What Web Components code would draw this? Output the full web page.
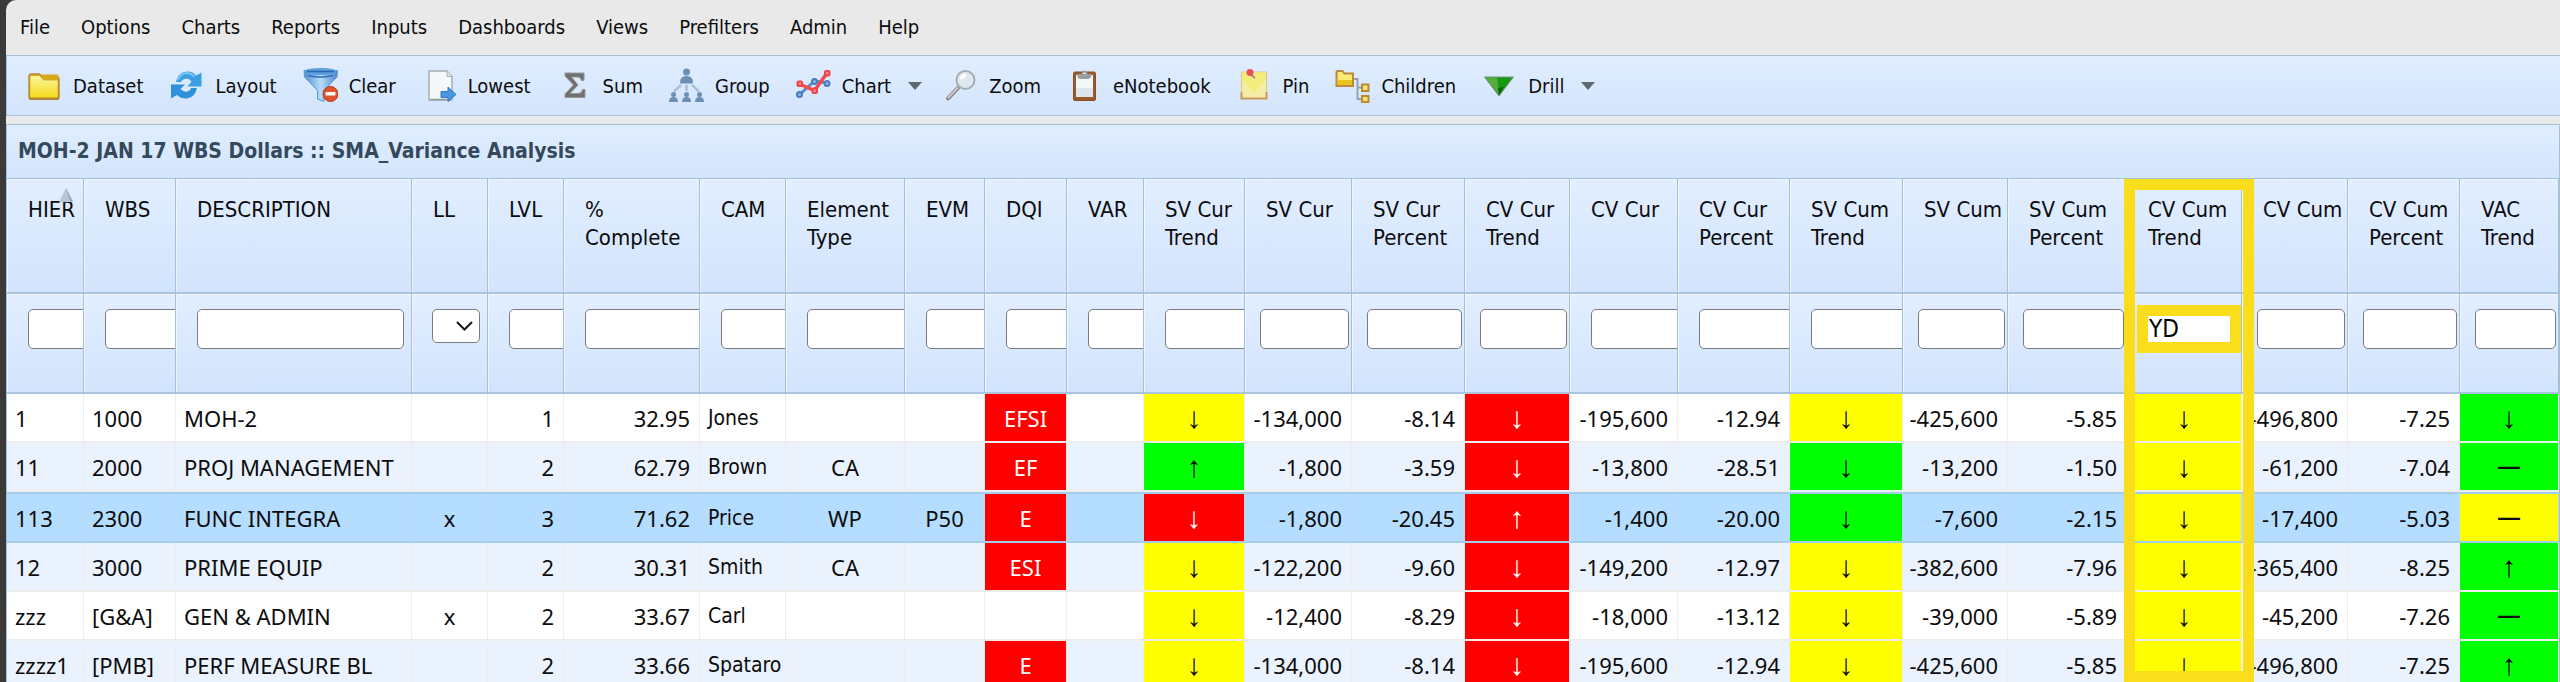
<!DOCTYPE html>
<html lang="en">
<head>
<meta charset="utf-8">
<title>SMA Variance Analysis</title>
<style>
  body { margin: 0; background: #3a3a3a; }
</style>
</head>
<body>
<app-window>
  <menu-bar slot="menu"></menu-bar>
  <tool-bar slot="tools">
    <tool-button icon="folder">Dataset</tool-button>
    <tool-button icon="refresh">Layout</tool-button>
    <tool-button icon="funnel">Clear</tool-button>
    <tool-button icon="page">Lowest</tool-button>
    <tool-button icon="sigma">Sum</tool-button>
    <tool-button icon="group">Group</tool-button>
    <tool-button icon="chart" menu>Chart</tool-button>
    <tool-button icon="zoom">Zoom</tool-button>
    <tool-button icon="clipboard">eNotebook</tool-button>
    <tool-button icon="pin">Pin</tool-button>
    <tool-button icon="children">Children</tool-button>
    <tool-button icon="drill" menu>Drill</tool-button>
  </tool-bar>
  <grid-panel>
    <span slot="title">MOH-2 JAN 17 WBS Dollars :: SMA_Variance Analysis</span>
    <data-grid></data-grid>
  </grid-panel>
</app-window>

<script>
const define = (name, html, setup) => customElements.define(name, class extends HTMLElement {
  constructor() {
    super();
    this.attachShadow({ mode: 'open' }).innerHTML = html;
  }
  connectedCallback() { if (setup) setup(this, this.shadowRoot); }
});

const ICONS = {
  folder: `<defs><linearGradient id="f" x2="0" y2="1"><stop stop-color="#fdf8a0"/><stop offset="1" stop-color="#f3dc1c"/></linearGradient></defs>
    <path d="M2 8.500q0-2.500 2.500-2.500h8l3 3h14q2.500 0 2.500 2.500v17q0 2.500-2.500 2.500h-25q-2.500 0-2.500-2.500z" fill="#d9ae22" stroke="#b98a3c" stroke-width="1.500"/>
    <path d="M13 6.500h17q1.500 0 1.500 2v3.500h-14z" fill="#d6a81e"/>
    <path d="M3.500 8h9l4 4.500h14v15.500q0 1-1 1h-25q-1 0-1-1z" fill="url(#f)"/><path d="M2 31h30" stroke="#a97f38" stroke-width="1.500"/>`,
  refresh: `<g fill="#3c9fe4"><path d="M7 14q2-9.500 10.500-10.500q6-.5 9.500 4l5.500-3v14h-14l4-5q-3-4-7-2.500q-3 1-3.500 3z"/>
    <path d="M28 20q-2 9.500-10 10.500q-6 .5-10-3.500l-6 3.500v-14h14l-4.500 4.500q3.500 3.500 7 2.500q3-1 3.500-3.500z" fill="#2f90dc"/></g><path d="M9 12q2.500-6.500 8.500-7q5 0 8 4" fill="none" stroke="#7cc3f2" stroke-width="2"/>`,
  funnel: `<defs><linearGradient id="n"><stop stop-color="#4c8fd4"/><stop offset=".5" stop-color="#b7dcfa"/><stop offset="1" stop-color="#4a87cb"/></linearGradient></defs>
    <path d="M1 2.500L1.500 9l13 13.500v8.500l6.500 2.500v-11l13-13.500l.5-6.500z" fill="url(#n)" stroke="#5d96d3"/>
    <ellipse cx="17.500" cy="3.500" rx="16.500" ry="3.500" fill="#5c9ddd"/><path d="M4 3.500h27" stroke="#2c66ad" stroke-width="1.500"/><path d="M5 7.500q12 3 25 0" stroke="#3471b6" stroke-width="1.500" fill="none"/>
    <circle cx="27.500" cy="26" r="7.500" fill="#e2522b" stroke="#b0392a"/><rect x="22.500" y="24" width="10" height="3.500" rx="1" fill="#fff"/>`,
  page: `<path d="M7 3h18l5 5.500v23.500h-23z" fill="#f4f8f9" stroke="#a6adb5" stroke-width="1.500"/><path d="M25 3v5.500h5" fill="#dfe6ea" stroke="#a6adb5"/>
    <path d="M8 31.500h21" stroke="#8f99a3" stroke-width="1.500"/><path d="M19 23.500h7v-4.500l8 7.500l-8 7v-4h-7z" fill="#4b97df" stroke="#2f78c2"/>`,
  sigma: `<path d="M8 5h19v7.500h-2.500q-.5-3.500-4-3.500h-6l6.500 8l-8 8.500h8q4 0 4.500-4h2.500v8h-20v-3.500l8.500-9l-8.500-9z" fill="#707070" stroke="#969696"/>`,
  group: `<g fill="#6c90b3"><circle cx="17.500" cy="4" r="3.500"/><path d="M11 15.500q-.5-7.500 6.500-7.500t6.500 7.500z"/>
    <circle cx="4.500" cy="26.500" r="2.500"/><path d="M0 34q0-5 4.500-5t4.500 5z"/><circle cx="17.500" cy="26.500" r="2.500"/><path d="M13 34q0-5 4.500-5t4.500 5z"/><circle cx="30.500" cy="26.500" r="2.500"/><path d="M26 34q0-5 4.500-5t4.500 5z"/></g>
    <path d="M17.500 17v6M12 17l-7 6.500M23 17l7 6.500" stroke="#a9c1d8" stroke-width="2.500" fill="none"/>`,
  chart: `<path d="M3.500 26.500L18.500 13l13 2" stroke="#5b87bd" stroke-width="3" fill="none"/><g fill="#8fb4e0" stroke="#4a7dbc" stroke-width="2"><circle cx="3.500" cy="26.500" r="2.500"/><circle cx="18.500" cy="13.500" r="2.500"/><circle cx="31" cy="15.500" r="2.500"/></g>
    <path d="M3.500 16L18.500 22.500L31 5" stroke="#f24a4e" stroke-width="3.500" fill="none"/><g fill="#f78f90" stroke="#f04448" stroke-width="2"><rect x="1.500" y="13.500" width="4.500" height="4.500" rx="1"/><rect x="16.500" y="20.500" width="4.500" height="4.500" rx="1"/><rect x="29" y="3" width="4.500" height="4.500" rx="1"/></g>`,
  zoom: `<path d="M15 20L5 30.500" stroke="#8e8e92" stroke-width="4" stroke-linecap="round"/><path d="M15 19.500L5 30" stroke="#d6d6d8" stroke-width="1.500"/><circle cx="22.500" cy="12" r="9" fill="#dfe8ef" stroke="#a5abb2" stroke-width="2"/><path d="M17 12q0-6 6-6.500q2 3-6 6.500z" fill="#fff"/>`,
  clipboard: `<rect x="6.500" y="4" width="22" height="28.500" rx="1.500" fill="#9a5a2c" stroke="#8a4c22"/><rect x="9" y="7" width="17" height="22" fill="#f3f7f8"/><path d="M9 20h17v9h-17z" fill="#dde6ea"/><path d="M10.500 6h4q0-3.500 3-3.500t3 3.500h4v2q-1 3-3 3h-8q-3 0-3-3z" fill="#9b9da1"/><path d="M15.500 6q2-3 4 0z" fill="#e8e8e8"/>`,
  pin: `<rect x="4.500" y="4" width="25" height="26.500" fill="#f4eda6" stroke="#dcc987"/><path d="M5 4.500h24v7l-12 13l-12-13z" fill="#f3ed7c"/><path d="M4.500 24v6.500h25v-6.500" fill="none" stroke="#c79a5c" stroke-width="2"/><path d="M13 6l5 4" stroke="#a08a80" stroke-width="2"/><circle cx="13" cy="4.500" r="3.500" fill="#ea4f53"/>`,
  children: `<path d="M19 11h3.500v20h6M22.500 19.500h6" fill="none" stroke="#9aa1aa" stroke-width="2"/><path d="M1.500 4q0-1 1-1h5l2 2.500h8.500v12.500h-16.500z" fill="#fbe978" stroke="#bb8a40" stroke-width="2"/><path d="M3 12h14v5h-14z" fill="#ebc41b"/>
    <rect x="27" y="16.500" width="6.500" height="6.500" fill="#f8e277" stroke="#bb8a35" stroke-width="2"/><rect x="27" y="28" width="6.500" height="6" fill="#f8e277" stroke="#bb8a35" stroke-width="2"/>`,
  drill: `<path d="M2.500 9h29l-14.500 19z" fill="#169a10" stroke="#7d9480"/><path d="M3 9.500h12l2.500 17.500z" fill="#56ab3c"/><path d="M16 20l6-1-5 8z" fill="#0b5f08"/>`
};

define('app-window', `
  <style>
    :host { display: block; height: 100vh; overflow: hidden; box-sizing: border-box; padding-left: 6px; font-family: "DejaVu Sans Condensed", "Noto Sans", sans-serif; color: #0c0c0e; }
    main { height: 100%; background: #e9e9e9; border-top-left-radius: 10px; display: flex; flex-direction: column; overflow: hidden; }
    ::slotted(tool-bar) { margin-bottom: 8px; }
  </style>
  <main><slot name="menu"></slot><slot name="tools"></slot><slot></slot></main>`);

define('menu-bar', `
  <style>
    :host { display: block; flex: none; height: 55px; }
    nav { display: flex; gap: 31px; padding: 0 14px; line-height: 54px; }
    a { color: inherit; text-decoration: none; font-size: 20px; }
  </style><nav></nav>`,
  (host, root) => {
    root.querySelector('nav').innerHTML = ['File', 'Options', 'Charts', 'Reports', 'Inputs', 'Dashboards', 'Views', 'Prefilters', 'Admin', 'Help']
      .map(t => `<a href="#">${t}</a>`).join('');
  });

define('tool-bar', `
  <style>
    :host { display: flex; flex: none; align-items: center; gap: 26px; height: 61px; box-sizing: border-box; padding: 0 20px;
      border: 1px solid #a3bfd9; border-right: 0; background: linear-gradient(#e0edfe, #d3e5fd); }
  </style><slot></slot>`);

define('tool-button', `
  <style>
    :host { display: block; }
    button { display: flex; align-items: center; gap: 11px; border: 0; padding: 0; background: none; font: inherit; font-size: 20px; line-height: 28px; color: inherit; }
    svg { width: 35px; height: 35px; flex: none; }
    i { display: none; border: 7px solid transparent; border-top: 8px solid #5e6873; border-bottom: 0; margin-left: 6px; }
    :host([menu]) i { display: block; }
    :host([menu]) button { margin-right: -5px; }
  </style><button type="button"><svg viewBox="0 0 35 35" aria-hidden="true"></svg><slot></slot><i></i></button>`,
  (host, root) => { root.querySelector('svg').innerHTML = ICONS[host.getAttribute('icon')]; });

define('grid-panel', `
  <style>
    :host { display: block; flex: 1; min-height: 0; overflow: hidden; border: solid #a3bfd9; border-width: 1px 1px 0; }
    h1 { margin: 0; padding: 0 11px; font-size: 21px; line-height: 53px; color: #34495c; background: linear-gradient(#e0edfe, #d3e5fd); border-bottom: 1px solid #a3bfd9; }
  </style><h1><slot name="title"></slot></h1><slot></slot>`);

define('grid-filter', `
  <style>
    :host { display: block; padding-left: 21px; height: 40px; }
    :host([fit]) { padding: 0 2px 0 15px; }
    :host([fit="wide"]) { padding: 0 7px 0 21px; }
    input { display: block; box-sizing: border-box; width: 180px; height: 40px; border: 1px solid #7b7b7f; border-radius: 5px; background: #fff; font: inherit; font-size: 24px; padding: 0 6px; }
    :host([fit]) input { width: 100%; }
    :host([marked]) { padding: 0 0 0 10px; margin-top: -4px; height: 48px; }
    :host([marked]) input { width: 100%; height: 48px; border: 11px solid #fbde1b; border-radius: 0; padding: 0 1px; }
  </style><input type="text">`,
  (host, root) => {
    const box = root.querySelector('input');
    box.setAttribute('aria-label', host.getAttribute('label'));
    box.value = host.getAttribute('value') || '';
  });

define('grid-choice', `
  <style>
    :host { display: block; position: relative; margin-left: 20px; width: 48px; height: 34px; }
    select { appearance: none; box-sizing: border-box; width: 48px; height: 34px; border: 1px solid #7b7b7f; border-radius: 5px; background: #fff; }
    svg { position: absolute; right: 7px; top: 11px; width: 17px; height: 12px; pointer-events: none; }
  </style><select aria-label="Filter LL"><option></option><option>x</option></select>
  <svg viewBox="0 0 17 12" aria-hidden="true"><path d="M1 2l7.500 7.500L16 2" fill="none" stroke="#16181c" stroke-width="2"/></svg>`);

/* name, width, cell alignment, filter kind */
const COLUMNS = [
  ['HIER', 77, 'l'], ['WBS', 92, 'l'], ['DESCRIPTION', 236, 'l', 'wide'], ['LL', 76, 'c', 'choice'], ['LVL', 76, 'r'],
  ['% Complete', 136, 'r'], ['CAM', 86, 'l name'], ['Element Type', 119, 'c'], ['EVM', 80, 'c'], ['DQI', 82, 'c'], ['VAR', 77, 'c'],
  ['SV Cur Trend', 101, 'c'], ['SV Cur', 107, 'r', 'fit'], ['SV Cur Percent', 113, 'r', 'fit'],
  ['CV Cur Trend', 105, 'c', 'fit'], ['CV Cur', 108, 'r'], ['CV Cur Percent', 112, 'r'],
  ['SV Cum Trend', 113, 'c'], ['SV Cum', 105, 'r', 'fit'], ['SV Cum Percent', 119, 'r', 'fit'],
  ['CV Cum Trend', 115, 'c', 'marked'], ['CV Cum', 106, 'r', 'fit'], ['CV Cum Percent', 112, 'r', 'fit'], ['VAC Trend', 99, 'c', 'fit']
];
/* a leading R, Y or G before a colon is the status colour */
const ROWS = `1|1000|MOH-2||1|32.95|Jones|||R:EFSI||Y:↓|-134,000|-8.14|R:↓|-195,600|-12.94|Y:↓|-425,600|-5.85|Y:↓|-496,800|-7.25|G:↓
11|2000|PROJ MANAGEMENT||2|62.79|Brown|CA||R:EF||G:↑|-1,800|-3.59|R:↓|-13,800|-28.51|G:↓|-13,200|-1.50|Y:↓|-61,200|-7.04|G:—
113|2300|FUNC INTEGRA|x|3|71.62|Price|WP|P50|R:E||R:↓|-1,800|-20.45|R:↑|-1,400|-20.00|G:↓|-7,600|-2.15|Y:↓|-17,400|-5.03|Y:—
12|3000|PRIME EQUIP||2|30.31|Smith|CA||R:ESI||Y:↓|-122,200|-9.60|R:↓|-149,200|-12.97|Y:↓|-382,600|-7.96|Y:↓|-365,400|-8.25|G:↑
zzz|[G&amp;A]|GEN &amp; ADMIN|x|2|33.67|Carl|||||Y:↓|-12,400|-8.29|R:↓|-18,000|-13.12|Y:↓|-39,000|-5.89|Y:↓|-45,200|-7.26|G:—
zzzz1|[PMB]|PERF MEASURE BL||2|33.66|Spataro|||R:E||Y:↓|-134,000|-8.14|R:↓|-195,600|-12.94|Y:↓|-425,600|-5.85|Y:↓|-496,800|-7.25|G:↑`
  .split('\n').map(r => r.split('|'));

define('data-grid', `
  <style>
    :host { display: block; position: relative; height: calc(100% - 54px); overflow: hidden; }
    table { width: 100%; table-layout: fixed; border-collapse: separate; border-spacing: 0; font-size: 22px; }
    th, td { box-sizing: border-box; padding: 0; overflow: hidden; white-space: nowrap; }
    th { position: relative; vertical-align: top; text-align: left; font-weight: 400; line-height: 28px; border-right: 1px solid #a3bfd9; border-bottom: 2px solid #abc5df;
      background: linear-gradient(#e2eeff, #d2e4fd); box-shadow: inset 1px 1px #eff6ff; }
    .names th { height: 115px; padding: 17px 0 0 21px; }
    .filters th { height: 100px; padding-top: 15px; }
    td { font-family: "Noto Sans", sans-serif; height: 49px; line-height: 46px; border: solid #ededed; border-width: 0 1px 2px 0; background: #fff; }
    tr:nth-child(even) td { background: #eaf2fd; }
    tr.selected td { background: #b4ddff; height: 51px; border-top: 2px solid #a5cdee; border-color: #a5cdee #b9daf5 #a5cdee #b9daf5; }
    td.l { padding-left: 8px; } td.r { padding-right: 9px; text-align: right; } td.c { text-align: center; }
    td.name { font-family: "DejaVu Sans Condensed", sans-serif; font-size: 21px; }
    tbody tr td.R { background: #f00; color: #fff; } tbody tr td.Y { background: #ff0; } tbody tr td.G { background: #0f0; }
    td.arrow { font-family: "Liberation Sans", sans-serif; font-size: 30px; }
    td.dash { font-family: "Liberation Sans", sans-serif; font-weight: 700; }
    .sort { position: absolute; right: 10px; top: 9px; width: 14px; height: 14px; }
    .highlight { position: absolute; top: 0; bottom: 0; left: 82.95%; width: 5.1%; box-sizing: border-box; border: 11px solid #fbde1b; pointer-events: none; }
  </style>
  <table><colgroup></colgroup><thead><tr class="names"></tr><tr class="filters"></tr></thead><tbody></tbody></table>
  <div class="highlight"></div>`,
  (host, root) => {
    const put = (sel, html) => { root.querySelector(sel).innerHTML = html; };
    const sort = '<svg class="sort" viewBox="0 0 14 14" aria-hidden="true"><path d="M7 0l7 14H0z" fill="#b7c6d6"/><path d="M7 0l7 14-3-1z" fill="#92a3b4"/></svg>';
    put('colgroup', COLUMNS.map(c => `<col style="width:${c[1]}px">`).join(''));
    put('.names', COLUMNS.map((c, i) => {
      const cut = c[0].match(/^(.*) (Complete|Type|Trend|Percent)$/);
      return `<th scope="col">${cut ? cut[1] + '<br>' + cut[2] : c[0]}${i ? '' : sort}</th>`;
    }).join(''));
    put('.filters', COLUMNS.map(([name, , , kind]) => {
      if (kind === 'choice') return '<th><grid-choice></grid-choice></th>';
      const attr = kind === 'marked' ? 'marked value="YD"' : kind ? `fit="${kind}"` : '';
      return `<th><grid-filter label="Filter ${name}" ${attr}></grid-filter></th>`;
    }).join(''));
    put('tbody', ROWS.map((row, r) => `<tr${r === 2 ? ' class="selected"' : ''}>` + row.map((cell, i) => {
      const m = cell.match(/^([RYG]):(.*)$/);
      const text = m ? m[2] : cell;
      const mark = /[↓↑]/.test(text) ? ' arrow' : text === '—' ? ' dash' : '';
      return `<td class="${COLUMNS[i][2]}${m ? ' ' + m[1] : ''}${mark}">${text}</td>`;
    }).join('') + '</tr>').join(''));
  });
</script>
</body>
</html>
